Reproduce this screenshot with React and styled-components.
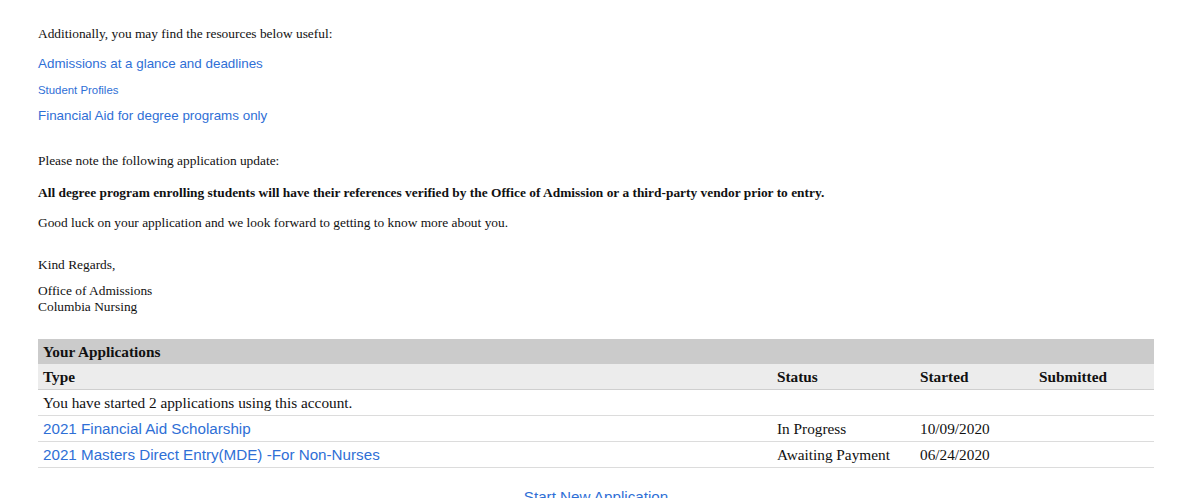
import styled, { createGlobalStyle } from "styled-components";

const GlobalStyle = createGlobalStyle`
  body {
    margin: 0;
    background: #fff;
    color: #111;
    font-family: "Liberation Serif", "Times New Roman", serif;
  }
`;

const Page = styled.div`
  padding: 26px 46px 0 38px;
`;

const Para = styled.p`
  margin: ${(p) => p.$mt || 0}px 0 0;
  font-size: 13.4px;
  line-height: 16px;
  font-weight: ${(p) => (p.$bold ? 700 : 400)};
`;

const Links = styled.div`
  display: flex;
  flex-direction: column;
  align-items: flex-start;
  gap: 8px;
  margin-top: 13px;
`;

const Link = styled.a`
  font-family: "Liberation Sans", Arial, sans-serif;
  font-size: ${(p) => (p.$small ? 11.4 : 13.4)}px;
  line-height: 18px;
  color: #2f6fd6;
  text-decoration: none;
  cursor: pointer;
`;

const Table = styled.div`
  margin-top: 24px;
  width: 1116px;
  font-size: 15.3px;
`;

const Caption = styled.div`
  background: #cbcbcb;
  height: 25px;
  line-height: 25px;
  padding: 0 5px;
  font-weight: 700;
`;

const Row = styled.div`
  display: grid;
  grid-template-columns: 734px 143px 119px 120px;
  height: 25px;
  align-items: center;
  border-bottom: 1px solid ${(p) => (p.$head ? "#cfcfcf" : "#dcdcdc")};
  background: ${(p) => (p.$head ? "#ececec" : "#fff")};
  font-weight: ${(p) => (p.$head ? 700 : 400)};
`;

const Cell = styled.div`
  padding: 0 5px;
  white-space: nowrap;
  grid-column: ${(p) => (p.$span ? "1 / -1" : "auto")};
`;

const TableLink = styled(Link)`
  font-size: 15.2px;
`;

const Footer = styled.div`
  width: 1116px;
  text-align: center;
  margin-top: 20px;
`;

const FooterLink = styled(Link)`
  font-size: 15.2px;
`;

const apps = [
  { type: "2021 Financial Aid Scholarship", status: "In Progress", started: "10/09/2020" },
  { type: "2021 Masters Direct Entry(MDE) -For Non-Nurses", status: "Awaiting Payment", started: "06/24/2020" },
];

export default function App() {
  return (
    <>
      <GlobalStyle />
      <Page>
        <Para>Additionally, you may find the resources below useful:</Para>
        <Links>
          <Link>Admissions at a glance and deadlines</Link>
          <Link $small>Student Profiles</Link>
          <Link>Financial Aid for degree programs only</Link>
        </Links>
        <Para $mt={28}>Please note the following application update:</Para>
        <Para $mt={16} $bold>
          All degree program enrolling students will have their references verified by the Office of Admission or a third-party vendor prior to entry.
        </Para>
        <Para $mt={14}>Good luck on your application and we look forward to getting to know more about you.</Para>
        <Para $mt={26}>Kind Regards,</Para>
        <Para $mt={10}>
          Office of Admissions
          <br />
          Columbia Nursing
        </Para>
        <Table>
          <Caption>Your Applications</Caption>
          <Row $head>
            <Cell>Type</Cell>
            <Cell>Status</Cell>
            <Cell>Started</Cell>
            <Cell>Submitted</Cell>
          </Row>
          <Row>
            <Cell $span>You have started 2 applications using this account.</Cell>
          </Row>
          {apps.map((a) => (
            <Row key={a.type}>
              <Cell>
                <TableLink>{a.type}</TableLink>
              </Cell>
              <Cell>{a.status}</Cell>
              <Cell>{a.started}</Cell>
              <Cell></Cell>
            </Row>
          ))}
        </Table>
        <Footer>
          <FooterLink>Start New Application</FooterLink>
        </Footer>
      </Page>
    </>
  );
}
